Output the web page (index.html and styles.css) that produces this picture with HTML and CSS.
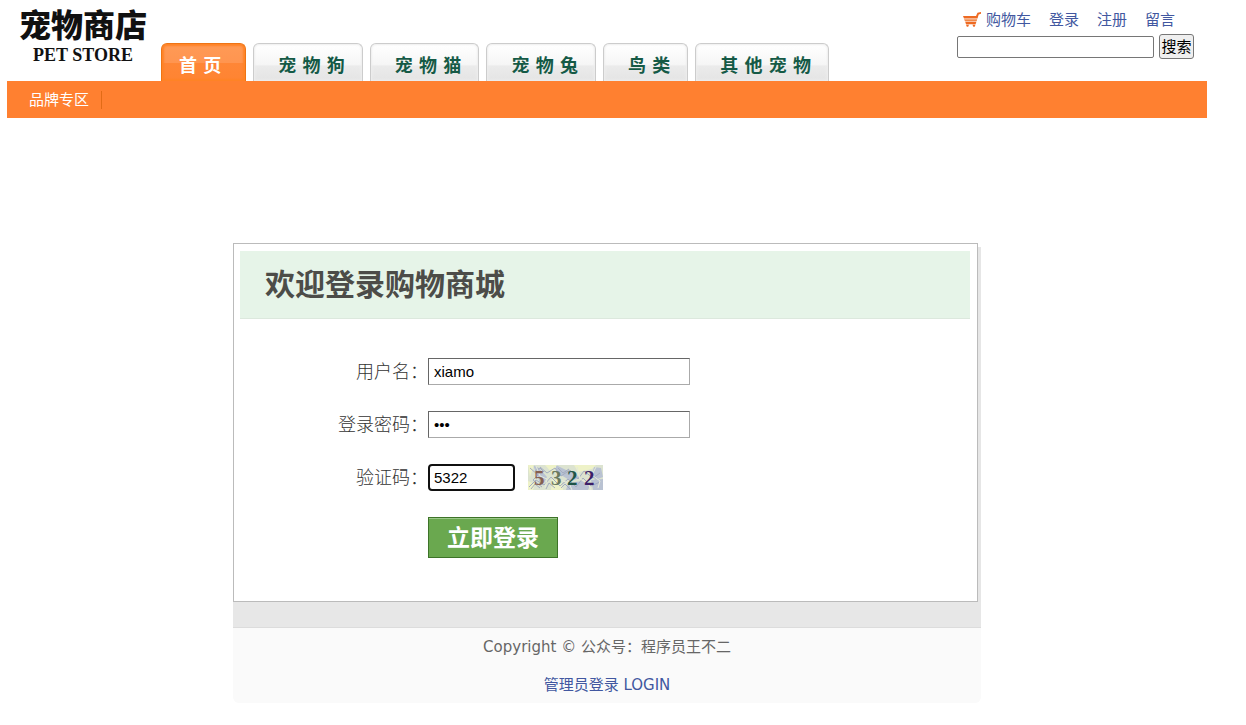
FILE: index.html
```html
<!DOCTYPE html>
<html lang="zh-CN">
<head>
<meta charset="utf-8">
<title>宠物商店</title>
<link rel="stylesheet" href="styles.css">
</head>
<body>
<div class="page">
  <header class="header">
    <a class="logo" href="#">
      <span class="logo-name">宠物商店</span>
      <span class="logo-sub">PET STORE</span>
    </a>
    <nav class="tabs">
      <a class="tab tab-active" href="#">首 页</a>
      <a class="tab" href="#">宠 物 狗</a>
      <a class="tab" href="#">宠 物 猫</a>
      <a class="tab" href="#">宠 物 兔</a>
      <a class="tab" href="#">鸟 类</a>
      <a class="tab" href="#">其 他 宠 物</a>
    </nav>
    <div class="tools">
      <div class="links">
        <a class="link cart" href="#">
          <svg class="cart-icon" width="18" height="16" viewBox="0 0 18 16" aria-hidden="true">
            <path fill="#ee6a22" d="M0 4h13l1.500-3.200L18 0v1.800l-2.300.7L14.500 6.500H1z"/>
            <path fill="#f08a4c" d="M1 7.200h13.200l-.6 2H2z"/>
            <path fill="#ee6a22" d="M2.200 9.800h11.200l-.8 2.400H3zM3 12.800h3l-.8 2H3.800zM9.500 12.800h3l-.8 2h-1.400z"/>
          </svg>购物车</a>
        <a class="link" href="#">登录</a>
        <a class="link" href="#">注册</a>
        <a class="link" href="#">留言</a>
      </div>
      <form class="search">
        <input class="search-input" type="text" aria-label="搜索">
        <button class="search-button" type="button">搜索</button>
      </form>
    </div>
  </header>
  <nav class="subnav"><a class="subnav-link" href="#">品牌专区</a></nav>

  <main class="content">
    <section class="panel">
      <h1 class="title">欢迎登录购物商城</h1>
      <form class="form">
        <label class="label" for="user">用户名：</label>
        <div class="field"><input class="input" id="user" type="text" value="xiamo"></div>
        <label class="label" for="pass">登录密码：</label>
        <div class="field"><input class="input" id="pass" type="password" value="123"></div>
        <label class="label" for="code">验证码：</label>
        <div class="field">
          <input class="input input-code" id="code" type="text" value="5322">
          <svg class="captcha" width="75" height="25" viewBox="0 0 75 25" role="img" aria-label="5322">
            <rect width="75" height="25" fill="#dce3d0"/>
            <g fill="#b9c2d2">
              <path d="M5 0l6 3 8 9-3 6H12L9 10zM28 0l10 5 8 2 6 6-9 3-10-6-5-3zM40 18l14-2 8 5-2 4H38zM66 2l7 1 2 9-8 3-3-6zM63 15l12-1v11H65z"/>
            </g>
            <g fill="#eef2c8">
              <path d="M0 0h6L2 12zM17 0h12l-5 8zM24 14l9 2 2 9H23zM46 0h22l-4 4-14 3zM0 16l7 3-2 6H0z"/>
            </g>
            <g fill="none" stroke="#a3acc0" stroke-width="1">
              <path d="M2 3l8 7-5 5 9 7M12 2l7 6 8-5 6 8 9-6 8 9 6-8 9 7 7-5M1 22l7-7 8 5 7-8 9 9 8-7 8 8 7-9 8 8 9-4"/>
              <path d="M3 24l4-5 5 4M18 24l3-6 6 5M33 23l4-4 5 5M7 6l5-3 4 4M30 3l5 5 6-4"/>
            </g>
            <g fill="none" stroke="#e6ead9" stroke-width="1">
              <path d="M8 1l4 10 7 3-2 9M27 7l5 8 9 3 3 7M49 2l3 12 8 4 3 7M68 2l-4 8 8 6-2 7"/>
            </g>
            <g class="captcha-text">
              <text x="6" y="20" fill="#86604f">5</text>
              <text x="23" y="20" fill="#6b7a60">3</text>
              <text x="39" y="20" fill="#1f5547">2</text>
              <text x="56" y="20" fill="#3c1f68">2</text>
            </g>
          </svg>
        </div>
        <div class="actions"><button class="submit" type="button">立即登录</button></div>
      </form>
    </section>
    <div class="band"></div>
    <footer class="footer">
      <p class="footer-line">Copyright © 公众号：程序员王不二</p>
      <p class="footer-line"><a class="link" href="#">管理员登录 LOGIN</a></p>
    </footer>
  </main>
</div>
</body>
</html>
```
FILE: styles.css
```css
* { box-sizing: border-box; }

body {
  margin: 0;
  background: #fff;
  color: #333;
  font: 15px/22px "DejaVu Sans", "Noto Sans CJK SC", sans-serif;
}

a { text-decoration: none; }

.page {
  max-width: 1200px;
  margin: 0 7px;
}

.header {
  display: flex;
  min-height: 81px;
}

.logo {
  display: flex;
  flex-direction: column;
  align-items: center;
  width: 154px;
  padding: 8px 14px 0 12px;
  color: #111;
}

.logo-name {
  font-size: 32px;
  line-height: 36px;
  font-weight: 900;
}

.logo-sub {
  font: bold 18px/22px "Liberation Serif", serif;
}

.tabs {
  display: flex;
  align-items: flex-end;
  gap: 7px;
}

.tab {
  height: 38px;
  padding: 0 17px 0 24px;
  border: 1px solid #ccc;
  border-bottom: 0;
  border-radius: 6px 6px 0 0;
  background: linear-gradient(#fff 0, #f6f6f6 55%, #ebebeb 60%, #e4e4e4 100%);
  box-shadow: inset 0 0 2px 1px #eee;
  color: #155a46;
  font-size: 18px;
  line-height: 43px;
  font-weight: bold;
  white-space: nowrap;
}

.tab-active {
  padding: 0 24px 0 17px;
  border-color: #ef7414;
  background: linear-gradient(#ff9a56 0, #ff9550 50%, #ff8636 52%, #ff8432 100%);
  box-shadow: inset 0 0 2px 2px #ff8326;
  color: #fff;
}

.tools {
  margin-left: auto;
  padding: 9px 13px 0 0;
}

.links {
  display: flex;
  gap: 18px;
  padding-left: 6px;
}

.link { color: #4157a0; }

.cart {
  display: flex;
  align-items: center;
  gap: 5px;
}

.search {
  display: flex;
  align-items: center;
  gap: 5px;
  margin-top: 3px;
}

.search-input {
  width: 197px;
  height: 22px;
  border: 1px solid #767676;
  border-radius: 2px;
  background: #fff;
}

.search-button {
  width: 35px;
  height: 25px;
  padding: 0;
  border: 1px solid #767676;
  border-radius: 3px;
  background: #efefef;
  color: #000;
  font: 15px/20px "Liberation Sans", "Noto Sans CJK SC", sans-serif;
}

.subnav {
  display: flex;
  align-items: center;
  height: 37px;
  padding-left: 22px;
  background: #ff8030;
}

.subnav-link {
  padding-right: 12px;
  border-right: 1px solid #e26b16;
  color: #fff;
  line-height: 18px;
}

.content {
  max-width: 748px;
  margin: 125px auto 0;
}

.panel {
  margin-right: 3px;
  padding: 7px 7px 43px 6px;
  border: 1px solid #bbb;
  background: #fff;
  box-shadow: 3px 4px 0 #e6e6e6;
}

.title {
  margin: 0;
  padding: 1px 25px 0;
  border-bottom: 1px solid #dce8dd;
  background: #e6f4e8;
  color: #4c4c48;
  font-size: 30px;
  line-height: 66px;
}

.form {
  display: grid;
  grid-template-columns: 188px 1fr;
  row-gap: 26px;
  padding-top: 39px;
}

.label {
  font-size: 18px;
  line-height: 27px;
  font-weight: 300;
  text-align: right;
}

.field {
  display: flex;
  align-items: center;
  gap: 13px;
}

.input {
  width: 262px;
  height: 27px;
  padding: 0 5px;
  border: 1px solid #aaa;
  border-top-color: #666;
  border-left-color: #666;
  background: #fff;
  color: #000;
  font: 15px/20px "Liberation Sans", sans-serif;
}

.input-code {
  width: 87px;
  padding: 0 4px;
  border: 2px solid #101010;
  border-radius: 4px;
}

.captcha-text {
  font: bold 21px "Liberation Serif", serif;
}

.actions { grid-column: 2; }

.submit {
  display: block;
  width: 130px;
  height: 41px;
  padding: 0;
  border: 1px solid #3d7328;
  background: #6aa84f;
  box-shadow: inset 0 1px 0 #9cc98a;
  color: #fff;
  font: bold 23px/38px "DejaVu Sans", "Noto Sans CJK SC", sans-serif;
}

.band {
  height: 26px;
  border-bottom: 1px solid #dcdcdc;
  background: #e7e7e7;
}

.footer {
  display: flex;
  flex-direction: column;
  gap: 16px;
  padding: 8px 0 7px;
  border-radius: 0 0 6px 6px;
  background: #fafafa;
  color: #666;
  text-align: center;
}

.footer-line { margin: 0; }
```
